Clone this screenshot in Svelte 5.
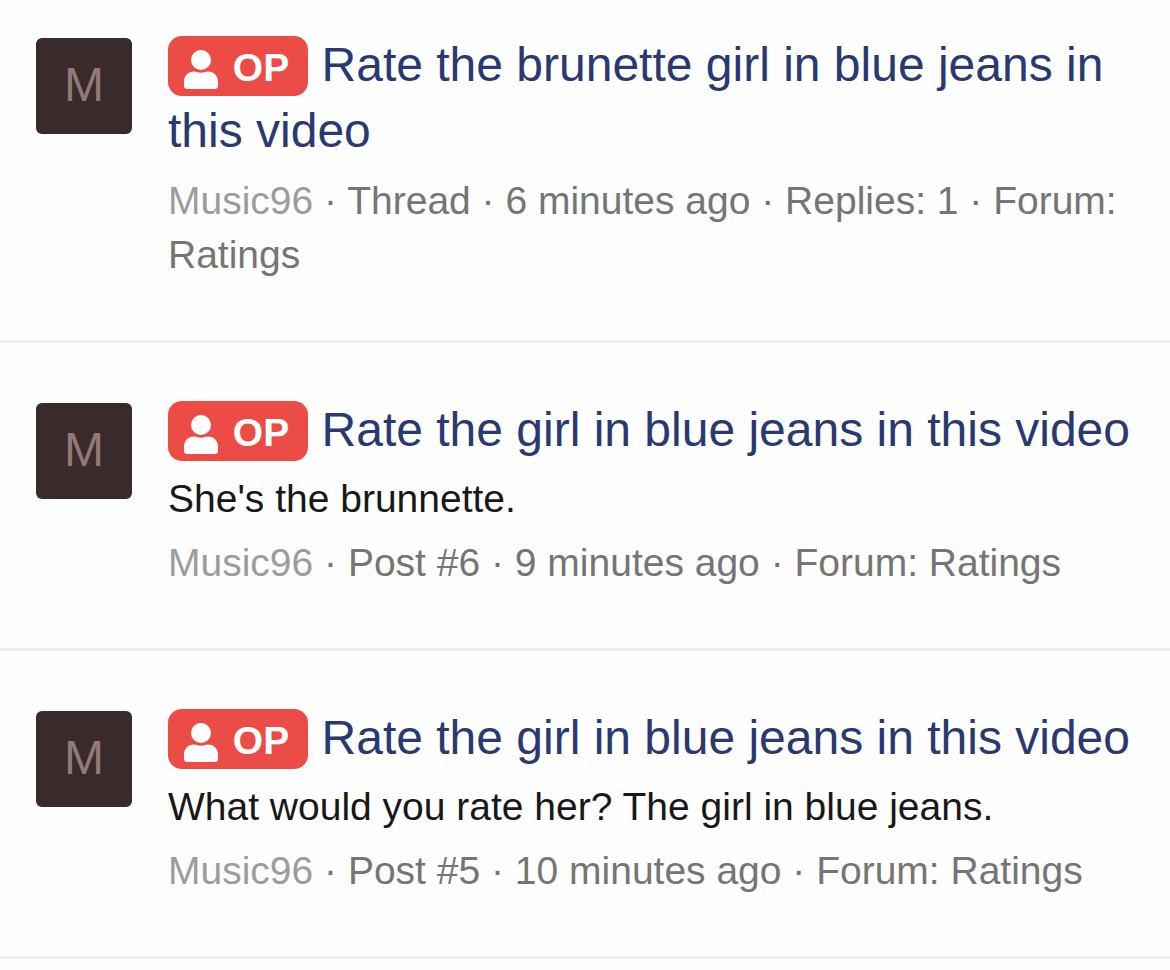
<script lang="ts">
	type Result = {
		id: number;
		title: string;
		snippet?: string;
		author: string;
		details: string[];
		forum: string;
	};

	const results: Result[] = [
		{
			id: 1,
			title: 'Rate the brunette girl in blue jeans in this video',
			author: 'Music96',
			details: ['Thread', '6 minutes ago', 'Replies: 1'],
			forum: 'Ratings'
		},
		{
			id: 2,
			title: 'Rate the girl in blue jeans in this video',
			snippet: "She's the brunnette.",
			author: 'Music96',
			details: ['Post #6', '9 minutes ago'],
			forum: 'Ratings'
		},
		{
			id: 3,
			title: 'Rate the girl in blue jeans in this video',
			snippet: 'What would you rate her? The girl in blue jeans.',
			author: 'Music96',
			details: ['Post #5', '10 minutes ago'],
			forum: 'Ratings'
		}
	];
</script>

<ol class="results">
	{#each results as result (result.id)}
		<li class="row">
			<a class="avatar" href="#member" aria-label={result.author}>{result.author[0]}</a>
			<div class="main">
				<h3>
					<span class="label">
						<svg viewBox="0 0 34 39" aria-hidden="true">
							<circle cx="17" cy="10" r="10" />
							<path
								d="M10 21.5C12 21.5 13.5 22.7 17 22.7S22 21.5 24 21.5C30 21.5 34 26 34 32V35.5Q34 39 30.5 39H3.5Q0 39 0 35.5V32C0 26 4 21.5 10 21.5Z"
							/>
						</svg>
						OP
					</span>
					<a href="#thread">{result.title}</a>
				</h3>
				{#if result.snippet}
					<p class="snippet">{result.snippet}</p>
				{/if}
				<p class="meta">
					<a href="#member">{result.author}</a>
					{#each result.details as detail}
						· {detail}{' '}
					{/each}
					· Forum: <a class="forum" href="#forum">{result.forum}</a>
				</p>
			</div>
		</li>
	{/each}
</ol>

<style>
	:global(body) {
		margin: 0;
		background: #fefefe;
		font-family: 'Liberation Sans', Helvetica, Arial, sans-serif;
	}

	.results {
		list-style: none;
		margin: 0;
		padding: 0;
	}

	.row {
		display: flex;
		align-items: flex-start;
		gap: 36px;
		padding: 32px 36px 58px;
		border-bottom: 3px solid #eee;
	}

	.row + .row {
		padding-top: 54px;
	}

	.avatar {
		flex: none;
		display: flex;
		align-items: center;
		justify-content: center;
		box-sizing: border-box;
		width: 96px;
		height: 96px;
		margin-top: 6px;
		padding-bottom: 2px;
		border-radius: 6px;
		background: #392b2b;
		color: #957878;
		font-size: 48px;
		line-height: 48px;
		text-decoration: none;
	}

	.main {
		flex: 1;
		min-width: 0;
	}

	h3,
	p {
		margin: 0;
		font-weight: 400;
	}

	h3 {
		font-size: 48px;
		line-height: 66px;
	}

	h3 a {
		color: #2a3970;
		text-decoration: none;
	}

	.label {
		display: inline-block;
		padding: 4px 19px 0 16px;
		border-radius: 14px;
		background: #eb4d46;
		color: #fff;
		font-size: 39px;
		font-weight: 700;
		line-height: 56px;
	}

	.label svg {
		width: 34px;
		height: 39px;
		margin-right: 4px;
		vertical-align: -8px;
		fill: currentColor;
	}

	.snippet {
		color: #181818;
		font-size: 39px;
		line-height: 54px;
		padding-top: 9px;
	}

	.meta {
		color: #757575;
		font-size: 39px;
		line-height: 54px;
		padding-top: 10px;
	}

	.meta a {
		color: #9c9c9c;
		text-decoration: none;
	}

	.meta .forum {
		color: inherit;
	}
</style>
